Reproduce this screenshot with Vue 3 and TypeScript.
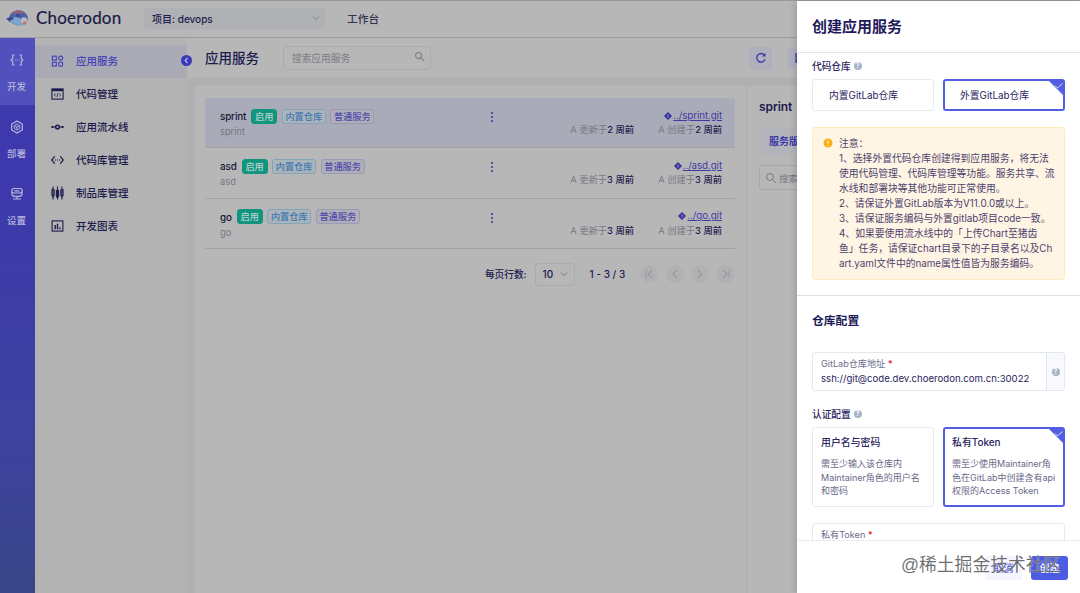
<script setup lang="ts">
interface Service { name: string; age: string; active?: boolean }
interface MenuItem { label: string; icon: string }

const rail: MenuItem[] = [
  { label: '开发', icon: 'dev' },
  { label: '部署', icon: 'deploy' },
  { label: '设置', icon: 'settings' },
]
const menu: MenuItem[] = [
  { label: '应用服务', icon: 'apps' },
  { label: '代码管理', icon: 'code' },
  { label: '应用流水线', icon: 'pipe' },
  { label: '代码库管理', icon: 'repo' },
  { label: '制品库管理', icon: 'artifact' },
  { label: '开发图表', icon: 'chart' },
]
const services: Service[] = [
  { name: 'sprint', age: '2 周前', active: true },
  { name: 'asd', age: '3 周前' },
  { name: 'go', age: '3 周前' },
]
const notes: string[] = [
  '注意：',
  '1、选择外置代码仓库创建得到应用服务，将无法',
  '使用代码管理、代码库管理等功能。服务共享、流',
  '水线和部署块等其他功能可正常使用。',
  '2、请保证外置GitLab版本为V11.0.0或以上。',
  '3、请保证服务编码与外置gitlab项目code一致。',
  '4、如果要使用流水线中的「上传Chart至猪齿',
  '鱼」任务，请保证chart目录下的子目录名以及Ch',
  'art.yaml文件中的name属性值皆为服务编码。',
]
const pagerPaths: string[] = [
  'M4 3v8M10 3L6 7l4 4',
  'M9 3L5 7l4 4',
  'M5 3l4 4-4 4',
  'M10 3v8M4 3l4 4-4 4',
]
</script>

<template>
  <div class="app">
    <header class="top">
      <svg class="logo" viewBox="0 0 24 20">
        <path d="M3 9C5 4 9 2 13 2.300c5 .3 8.500 3.700 9 8-.6 4-4 6.700-8.500 7C9 17.500 5 15 3 11.500z" fill="#4e62a6" />
        <path d="M5 6C9 1.500 16 1.500 20.500 6c-3-1.200-5-1.500-8-.3C9.500 4.800 8 5 5 6z" fill="#a4606c" />
        <path d="M4 12c3-3 7-4 10-2 1 4 4 6 7 5-3 3-7 3-11 1.500-3-1-5-2.500-6-4.500z" fill="#7ea3cf" />
        <path d="M0 10.500l5-1.500 3 2-4 1.500.5 2z" fill="#3a4587" />
        <circle cx="18" cy="12.500" r="3.300" fill="#b9b6c2" />
        <circle cx="12" cy="7.500" r="2" fill="#3b4b92" />
        <path d="M16 15.500l3.500-2.500 1.500 1.500-2.500 2.500z" fill="#b57773" />
      </svg>
      <span class="brand">Choerodon</span>
      <div class="project">
        <span>项目: devops</span>
        <svg class="caret" viewBox="0 0 10 10"><path d="M2 3.500l3 3 3-3" /></svg>
      </div>
      <span class="bench">工作台</span>
    </header>

    <div class="body">
      <nav class="rail">
        <div v-for="(r, i) in rail" :key="r.label" class="rail-item" :class="{ on: i === 0 }">
          <svg viewBox="0 0 14 14">
            <g v-if="r.icon === 'dev'"><path d="M4.500 2H2.800v3.200L1.200 7l1.600 1.800V12h1.700M9.500 2h1.700v3.200L12.800 7l-1.600 1.800V12H9.500" /><path d="M4.800 7h1M6.600 7h1M8.400 7h.9" /></g>
            <g v-else-if="r.icon === 'deploy'"><path d="M7 1l5.300 3v6L7 13l-5.300-3V4z" /><path d="M7 4l2.700 1.500v3L7 10 4.300 8.500v-3zM7 7v3M7 7L4.500 5.700M7 7l2.500-1.300" stroke-width=".9" /></g>
            <g v-else><rect x="1.800" y="1.500" width="10.400" height="4.500" rx="2.200" /><path d="M2 5v2c0 1.500 1 2.300 2.500 2.300h5C11 9.300 12 8.500 12 7V5M7 9.300v3M3 12h8M4.500 3.800h5" /></g>
          </svg>
          <span>{{ r.label }}</span>
        </div>
      </nav>

      <aside class="menu">
        <div v-for="(m, i) in menu" :key="m.label" class="menu-item" :class="{ on: i === 0 }">
          <svg viewBox="0 0 14 14">
            <g v-if="m.icon === 'apps'"><rect x="1.500" y="1.800" width="4.200" height="4.200" /><rect x="8.300" y="1.800" width="4.200" height="4.200" rx="2" /><rect x="1.500" y="8.300" width="4.200" height="4.200" /><rect x="8.300" y="8.300" width="4.200" height="4.200" rx="1" /></g>
            <g v-else-if="m.icon === 'code'"><rect x="1" y="1.500" width="12" height="11" /><path d="M1 2.800h12" stroke-width="2.400" /><path d="M5 6.500L3.500 8 5 9.500M9 6.500L10.500 8 9 9.500M7.600 6L6.400 10" stroke-width=".9" /></g>
            <g v-else-if="m.icon === 'pipe'"><circle cx="7" cy="7" r="2" stroke-width="1.600" /><path d="M2 7h3M9 7h3" /><path d="M.5 7h2M11.500 7h2" stroke-width="2" /></g>
            <g v-else-if="m.icon === 'repo'"><path d="M4 3L.8 7 4 11M10 3l3.200 4L10 11" stroke-width="1.400" /><path d="M4.200 7h1.200M6.400 7h1.200M8.600 7h1.200" /></g>
            <g v-else-if="m.icon === 'artifact'"><path d="M2.200 0v14M7 0v14M11.800 0v14" /><path d="M1 3.500h2.400v6L2.200 11 1 9.500zM5.800 4.500h2.400v6L7 12l-1.200-1.500zM10.600 3.500H13v6L11.800 11l-1.200-1.500z" /></g>
            <g v-else><rect x="1.200" y="1.500" width="11.600" height="11" /><path d="M4.500 6v4.500M7 4.500v6M9.500 8.500v2" stroke-width="1.500" /></g>
          </svg>
          <span>{{ m.label }}</span>
        </div>
        <svg class="fold" viewBox="0 0 10 10"><circle cx="5" cy="5" r="5" /><path d="M6 2.700L3.800 5 6 7.300" /></svg>
      </aside>

      <main class="main">
        <div class="page-head">
          <h1>应用服务</h1>
          <div class="search">
            <span>搜索应用服务</span>
            <svg viewBox="0 0 12 12"><circle cx="5" cy="5" r="3.300" /><path d="M7.500 7.500L11 11" /></svg>
          </div>
          <div class="tool refresh">
            <svg viewBox="0 0 12 12"><path d="M10 7.500A4.300 4.300 0 1 1 9.500 3.200" /><path d="M10.500 1v3.500H7z" class="solid" /></svg>
          </div>
          <div class="tool">
            <svg viewBox="0 0 12 12"><path d="M3 2h6v3H3zM3 7h6v3H3z" /></svg>
          </div>
        </div>
        <div class="content">
          <section class="list">
            <div v-for="s in services" :key="s.name" class="row" :class="{ on: s.active }">
              <div class="who">
                <div class="title"><b>{{ s.name }}</b><i class="tag run">启用</i><i class="tag repo">内置仓库</i><i class="tag kind">普通服务</i></div>
                <div class="sub">{{ s.name }}</div>
              </div>
              <svg class="more" viewBox="0 0 4 12"><circle cx="2" cy="2" r="1.100" /><circle cx="2" cy="6" r="1.100" /><circle cx="2" cy="10" r="1.100" /></svg>
              <div class="when upd"><span>A</span> 更新于<b>{{ s.age }}</b></div>
              <div class="when made">
                <div class="link"><svg viewBox="0 0 8 8"><path d="M4 0l4 4-4 4-4-4z" /><path class="cut" d="M3.300 2.300l1.900 1.900M4 3v3" /></svg><u>../{{ s.name }}.git</u></div>
                <div><span>A</span> 创建于<b>{{ s.age }}</b></div>
              </div>
            </div>
            <div class="pager">
              <span class="per">每页行数:</span>
              <div class="size"><span>10</span><svg viewBox="0 0 10 10"><path d="M2 3.500l3 3 3-3" /></svg></div>
              <span class="range">1 - 3 / 3</span>
              <svg v-for="p in pagerPaths" :key="p" class="pg" viewBox="-2 -2 18 18"><circle cx="7" cy="7" r="9" /><path :d="p" /></svg>
            </div>
          </section>
          <section class="detail">
            <h2>sprint</h2>
            <div class="tab">服务版本</div>
            <div class="filter"><svg viewBox="0 0 12 12"><circle cx="5" cy="5" r="3.500" /><path d="M7.500 7.500L11 11" /></svg><span>搜索</span></div>
          </section>
        </div>
      </main>
    </div>

    <aside class="drawer">
      <h2 class="drawer-head">创建应用服务</h2>
      <div class="drawer-body">
        <div class="label">代码仓库<span class="help">?</span></div>
        <div class="pair">
          <div class="option"><span>内置GitLab仓库</span></div>
          <div class="option chosen"><span>外置GitLab仓库</span><svg class="corner" viewBox="0 0 16 16"><path d="M0 0h16v16z" /><path class="tick" d="M7 5.500l2.500 2.500 5-4.500" /></svg></div>
        </div>
        <div class="alert">
          <svg viewBox="0 0 10 10"><circle cx="5" cy="5" r="4.500" /><path d="M5 2.500v3.300M5 7v.8" /></svg>
          <div class="notes"><div v-for="n in notes" :key="n">{{ n }}</div></div>
        </div>
        <h3>仓库配置</h3>
        <div class="field">
          <div class="field-in"><small>GitLab仓库地址 <em>*</em></small><span>ssh://git@code.dev.choerodon.com.cn:30022</span></div>
          <div class="field-help"><span class="help">?</span></div>
        </div>
        <div class="label auth">认证配置<span class="help">?</span></div>
        <div class="pair cards">
          <div class="card"><b>用户名与密码</b><div>需至少输入该仓库内</div><div>Maintainer角色的用户名</div><div>和密码</div></div>
          <div class="card chosen"><b>私有Token</b><div>需至少使用Maintainer角</div><div>色在GitLab中创建含有api</div><div>权限的Access Token</div><svg class="corner" viewBox="0 0 16 16"><path d="M0 0h16v16z" /><path class="tick" d="M7 5.500l2.500 2.500 5-4.500" /></svg></div>
        </div>
        <div class="field token"><div class="field-in"><small>私有Token <em>*</em></small></div></div>
      </div>
      <footer class="foot">
        <span class="btn ghost">取消</span>
        <span class="btn solid-btn">创建</span>
      </footer>
    </aside>
    <div class="mark">@稀土掘金技术社区</div>
  </div>
</template>

<style>
body { margin: 0; overflow: hidden; }
</style>

<style scoped>
* { box-sizing: border-box; }
.app { position: relative; width: 1080px; height: 593px; overflow: hidden; background: #b7b7b8; color: #1d1b4e; font-family: "Inter", "Noto Sans CJK SC", sans-serif; font-size: 10px; display: flex; flex-direction: column; white-space: nowrap; }
svg { display: block; flex: none; fill: none; stroke: currentColor; }
i, em { font-style: normal; }
h1, h2, h3 { margin: 0; }
.top { height: 38px; flex: none; display: flex; align-items: center; border-top: 1px solid #9b9b9b; border-bottom: 1px solid #9c9c9e; padding: 0 0 2px 6px; }
.logo { width: 24px; height: 20px; stroke: none; }
.brand { font-family: "Lato", sans-serif; font-size: 17px; letter-spacing: .2px; width: 86px; margin-left: 6px; color: #1b1a47; line-height: 22px; -webkit-text-stroke: .2px #1b1a47; }
.project { margin-left: 22px; width: 181px; height: 21px; background: #b0b1b4; border-radius: 3px; padding: 0 4px 0 8px; display: flex; align-items: center; justify-content: space-between; font-weight: 500; font-size: 10px; }
.caret { width: 10px; height: 10px; color: #7d7e88; }
.bench { margin-left: 22px; font-size: 10.700px; font-weight: 500; color: #34334f; }
.body { flex: 1; display: flex; min-height: 0; }
.rail { width: 35px; background: linear-gradient(#3f3bae, #3d39ac 28%, #3d429f 72%, #394587); color: #b6b7dc; }
.rail-item { height: 67px; display: flex; flex-direction: column; align-items: center; padding: 15px 2px 0 0; font-size: 9.500px; font-weight: 500; line-height: 14px; gap: 13px; }
.rail-item.on { background: #5150bd; }
.rail-item svg { width: 14px; height: 14px; stroke-width: 1.200; }
.menu { position: relative; width: 152px; padding-top: 7px; background: #b3b3b4; color: #1d1b4c; }
.menu-item { height: 33px; display: flex; align-items: center; padding-left: 16px; gap: 12px; font-size: 10.500px; font-weight: 500; line-height: 16px; }
.menu-item.on { background: #a9aab4; color: #4541b5; }
.menu-item svg { width: 13px; height: 14px; stroke-width: 1.200; margin-bottom: 1px; }
.fold { position: absolute; right: -5px; top: 17px; width: 11px; height: 11px; fill: #3b38b8; stroke: none; z-index: 1; }
.fold path { fill: none; stroke: #c7c7df; stroke-width: 1; }
.main { flex: 1; display: flex; flex-direction: column; background: #afb0b1; }
.page-head { height: 40px; display: flex; align-items: center; padding-left: 18px; background: #b7b7b8; }
.page-head h1 { font-size: 13.500px; font-weight: 500; width: 78px; line-height: 20px; }
.search { width: 148px; height: 24px; border: 1px solid #aaabad; border-radius: 4px; display: flex; align-items: center; justify-content: space-between; padding: 0 5px 0 8px; font-size: 9.700px; color: #7c7d85; }
.search svg { width: 11px; height: 11px; margin-bottom: 3px; stroke-width: 1.200; }
.tool { width: 23px; height: 23px; margin-left: 15px; border-radius: 3px; background: #b0b0bd; color: #3c39a9; display: flex; align-items: center; justify-content: center; }
.refresh { margin-left: 318px; }
.tool svg { width: 12px; height: 12px; stroke-width: 1.300; }
.solid { fill: currentColor; stroke: none; }
.content { flex: 1; margin: 8px 0 0 8px; background: #b7b7b8; display: flex; }
.list { width: 552px; padding: 12px 11px 0 10px; border-right: 1px solid #acadaf; }
.row { height: 50.400px; display: flex; border-bottom: 1px solid #a2a3a6; padding: 10px 13px 0 15px; }
.row.on { background: #aaabb8; border-radius: 3px 3px 0 0; }
.who { width: 270px; }
.title { display: flex; align-items: center; height: 16px; }
.title b { font-size: 9.900px; font-weight: 500; letter-spacing: -.15px; margin-right: 5px; color: #171737; }
.tag { width: 44px; height: 15px; line-height: 13px; border: 1px solid; border-radius: 3px; text-align: center; font-size: 9.200px; margin-right: 4.500px; font-weight: 500; }
.tag.run { width: 26px; background: #11957f; border-color: #11957f; color: #b4d3ce; }
.tag.repo { color: #3d78b2; border-color: #82a5b8; background: #acb4bb; }
.tag.kind { color: #524cae; border-color: #9a99b8; background: #afafb8; }
.sub { font-size: 9.300px; color: #767783; line-height: 15px; }
.more { width: 4px; height: 12px; fill: #3c39a9; stroke: none; margin-top: 3px; }
.when { font-size: 9.300px; color: #777884; line-height: 14px; text-align: right; }
.when b { color: #1e1c4d; font-weight: 500; }
.upd { flex: 1; padding-top: 15px; }
.made { width: 88px; }
.link { display: flex; justify-content: flex-end; align-items: center; gap: 1px; color: #3f3ba6; font-size: 9.800px; height: 15px; letter-spacing: -.1px; }
.link svg { width: 8px; height: 8px; fill: #34319f; stroke: none; }
.link .cut { stroke: #aaabb8; stroke-width: .7; }
.pager { display: flex; align-items: center; justify-content: flex-end; height: 24px; margin-top: 13px; font-size: 10px; font-weight: 500; }
.per { font-size: 9.700px; }
.size { width: 40px; height: 23px; border: 1px solid #aaabad; border-radius: 3px; margin: 0 15px 0 8px; display: flex; align-items: center; justify-content: space-between; padding: 0 5px 0 7px; }
.size svg { width: 10px; height: 10px; color: #747580; }
.range { margin-right: 7px; }
.pg { width: 18px; height: 18px; margin-left: 7.700px; stroke: #999aa0; stroke-width: 1.100; }
.pg circle { fill: #b1b1b3; stroke: none; }
.detail { padding: 12px 0 0 12px; width: 120px; }
.detail h2 { font-size: 12px; line-height: 18px; font-weight: 600; letter-spacing: -.1px; }
.tab { margin: 12px 0 0 2px; padding-left: 8px; height: 27px; line-height: 27px; background: #b3b3ba; color: #3f3bab; font-weight: 600; font-size: 10px; }
.filter { height: 25px; margin-top: 10px; border: 1px solid #a6a7aa; border-radius: 3px; display: flex; align-items: center; gap: 2px; padding-left: 5px; color: #777884; font-size: 9.500px; }
.filter svg { width: 12px; height: 12px; }
.drawer { position: absolute; left: 797px; top: 1px; width: 283px; height: 592px; background: #fff; display: flex; flex-direction: column; color: #28245d; box-shadow: -2px 0 6px rgba(0, 0, 0, .14); }
.drawer-head { height: 52px; flex: none; border-bottom: 1px solid #e4e6ef; padding: 14px 0 0 15px; font-size: 15px; line-height: 24px; font-weight: 600; color: #1f1b5c; }
.drawer-body { flex: 1; min-height: 0; overflow: hidden; padding-left: 15px; }
.label { height: 26px; display: flex; align-items: center; gap: 3px; font-size: 9.700px; font-weight: 500; }
.help { width: 8px; height: 8px; border-radius: 50%; background: #a9b3c8; color: #fff; font-size: 7px; line-height: 8px; font-weight: 600; text-align: center; }
.pair { display: flex; gap: 9px; }
.option { position: relative; width: 122px; height: 32px; border: 1px solid #e6eaf2; border-radius: 3px; padding-left: 16px; line-height: 32px; font-size: 9.800px; }
.chosen.chosen { border: 2px solid #515fe0; }
.option.chosen { line-height: 30px; padding-left: 15px; }
.corner { position: absolute; top: -1px; right: -1px; width: 16px; height: 16px; fill: #515fe0; stroke: none; }
.corner .tick { fill: none; stroke: #dfe2ff; stroke-width: 1; }
.alert { margin-top: 16px; width: 253px; height: 153px; border: 1px solid #ffeabb; border-radius: 3px; background: #fff5e4; display: flex; padding: 8px 0 0 10px; gap: 6px; }
.alert svg { width: 10px; height: 10px; margin-top: 2px; fill: #fcae13; stroke: none; }
.alert svg path { stroke: #fff; }
.notes { font-size: 9.800px; line-height: 15.050px; color: #4d426d; }
h3 { margin: 15px 0 0 -15px; padding: 15px 0 0 15px; border-top: 1px solid #dcdee5; font-size: 11.800px; line-height: 20px; font-weight: 600; color: #1f1b5c; }
.field { margin-top: 21px; width: 253px; height: 39px; border: 1px solid #e3e8f0; border-radius: 3px; display: flex; }
.field-in { flex: 1; padding: 4px 0 0 8px; display: flex; flex-direction: column; line-height: 16px; font-size: 9.600px; }
.field-in small { font-size: 9.100px; color: #6c6a8b; line-height: 14px; }
.field em { color: #ee3545; font-weight: 700; }
.field-help { width: 18px; border-left: 1px solid #e3e8f0; background: #f7f9fc; display: flex; align-items: center; justify-content: center; }
.label.auth { margin-top: 10px; }
.card { position: relative; width: 122px; height: 80px; border: 1px solid #e6eaf2; border-radius: 3px; padding: 7px 0 0 8px; font-size: 9px; line-height: 13.600px; color: #6a6888; }
.card.chosen { padding: 6px 0 0 7px; }
.card b { display: block; font-size: 9.900px; font-weight: 500; line-height: 15px; color: #28245d; margin-bottom: 7px; }
.token { margin-top: 16px; }
.foot { height: 53px; flex: none; border-top: 1px solid #e9ebf1; background: #fff; display: flex; justify-content: flex-end; gap: 9px; padding: 15px 12px 0 0; }
.btn { width: 37px; height: 24px; border-radius: 3px; line-height: 24px; text-align: center; font-size: 10px; font-weight: 500; }
.ghost { background: #f4f5fe; color: #5360e4; }
.solid-btn { background: #4c5be2; color: #fff; }
.mark { position: absolute; left: 901px; top: 553px; font-size: 17.800px; line-height: 24px; color: rgba(70, 70, 75, .78); font-family: "Liberation Sans", "Noto Sans CJK SC", sans-serif; text-shadow: 0 0 1px #fff; }
</style>
